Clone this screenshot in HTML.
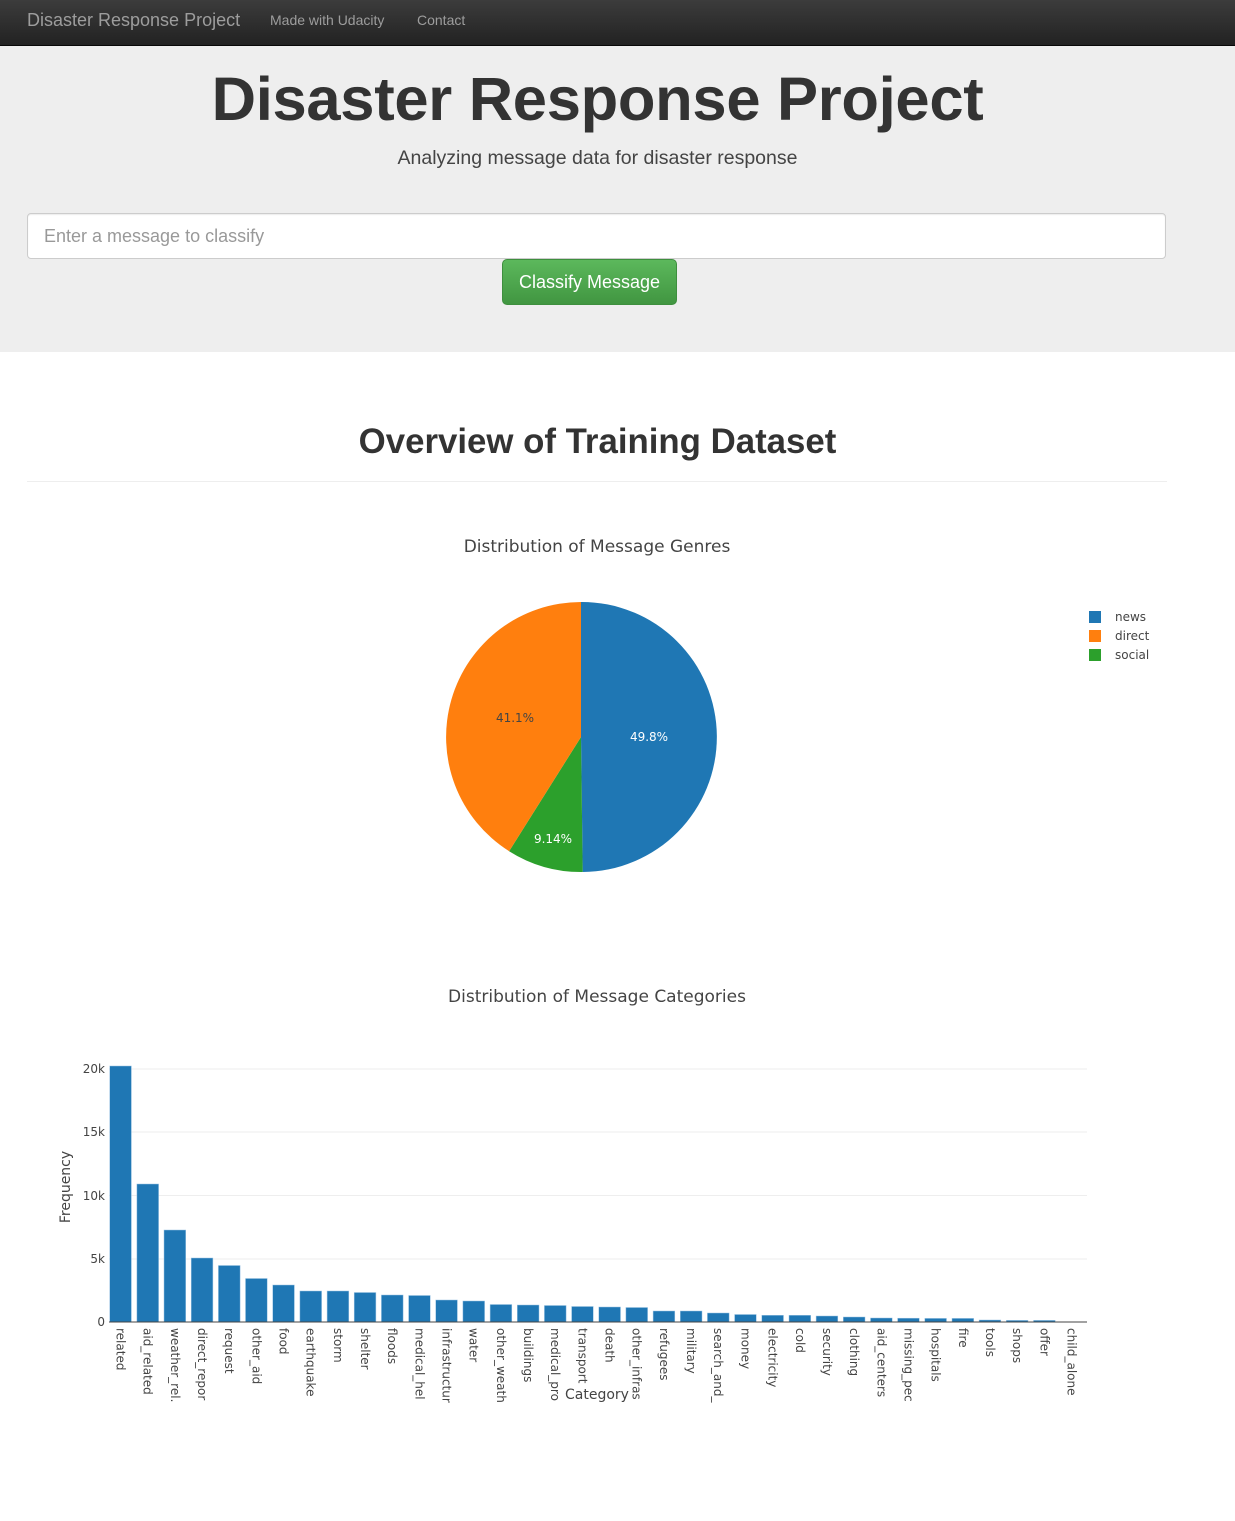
<!DOCTYPE html>
<html><head><meta charset="utf-8"><style>
body{margin:0;font-family:"Liberation Sans",Helvetica,Arial,sans-serif;color:#333;background:#fff;width:1235px;height:1521px;overflow:hidden;position:relative}
.nav{position:absolute;left:0;top:0;width:1235px;height:45px;background:linear-gradient(#3c3c3c,#222);border-bottom:1px solid #080808}
.nav span{position:absolute;top:0;line-height:41px;color:#9d9d9d}
.jumbo{position:absolute;left:0;top:46px;width:1235px;height:306px;background:#eee}
h1{position:absolute;left:0;width:1195px;text-align:center;top:62px;margin:0;font-size:61.5px;font-weight:bold;line-height:76px;letter-spacing:-0.3px}
.sub{position:absolute;left:0;width:1195px;text-align:center;top:147px;font-size:19.5px;font-weight:300;color:#444}
.inp{position:absolute;left:27px;top:213px;width:1137px;height:44px;border:1px solid #ccc;border-radius:4px;background:#fff;box-shadow:inset 0 1px 1px rgba(0,0,0,.075)}
.inp span{position:absolute;left:16px;top:12px;font-size:18px;color:#999}
.btn{position:absolute;left:502px;top:259px;width:173px;height:44px;border:1px solid #3e8f3e;border-radius:5px;background:linear-gradient(#5cb85c,#419641);color:#fff;font-size:18px;text-align:center;line-height:44px}
h2{position:absolute;left:0;width:1195px;text-align:center;top:422px;margin:0;font-size:34.8px;font-weight:bold}
.hr{position:absolute;left:27px;top:481px;width:1140px;border-top:1px solid #eee}
svg text{font-family:"DejaVu Sans",sans-serif}
</style></head><body>
<div class="nav"><span style="left:27px;font-size:18px">Disaster Response Project</span><span style="left:270px;font-size:14px">Made with Udacity</span><span style="left:417px;font-size:14px">Contact</span></div>
<div class="jumbo"></div>
<h1>Disaster Response Project</h1>
<div class="sub">Analyzing message data for disaster response</div>
<div class="inp"><span>Enter a message to classify</span></div>
<div class="btn">Classify Message</div>
<h2>Overview of Training Dataset</h2>
<div class="hr"></div>
<svg width="1235" height="1521" style="position:absolute;left:0;top:0" xmlns="http://www.w3.org/2000/svg">
<text x="597" y="552" font-size="17" fill="#444" text-anchor="middle">Distribution of Message Genres</text>
<path d="M581,737 L581,602 A135,135 0 0 1 582.7,872 Z" fill="#1f77b4"/>
<path d="M581,737 L582.7,872 A135,135 0 0 1 509.1,851.2 Z" fill="#2ca02c"/>
<path d="M581,737 L509.1,851.2 A135,135 0 0 1 581,602 Z" fill="#ff7f0e"/>
<text x="649" y="741" font-size="12" fill="#fff" text-anchor="middle">49.8%</text>
<text x="515" y="722" font-size="12" fill="#444" text-anchor="middle">41.1%</text>
<text x="553" y="843" font-size="12" fill="#fff" text-anchor="middle">9.14%</text>
<rect x="1089" y="611" width="12" height="12" fill="#1f77b4"/><text x="1115" y="621" font-size="12" fill="#444">news</text>
<rect x="1089" y="630" width="12" height="12" fill="#ff7f0e"/><text x="1115" y="640" font-size="12" fill="#444">direct</text>
<rect x="1089" y="649" width="12" height="12" fill="#2ca02c"/><text x="1115" y="659" font-size="12" fill="#444">social</text>

<text x="597" y="1002" font-size="17" fill="#444" text-anchor="middle">Distribution of Message Categories</text>
<g stroke="#eee" stroke-width="1">
<line x1="109" x2="1087" y1="1069" y2="1069"/><line x1="109" x2="1087" y1="1132" y2="1132"/><line x1="109" x2="1087" y1="1195.5" y2="1195.5"/><line x1="109" x2="1087" y1="1259" y2="1259"/>
</g>
<g font-size="12" fill="#444" text-anchor="end">
<text x="105" y="1073">20k</text><text x="105" y="1136">15k</text><text x="105" y="1200">10k</text><text x="105" y="1263">5k</text><text x="105" y="1326">0</text>
</g>
<text transform="translate(70,1187) rotate(-90)" font-size="14" fill="#444" text-anchor="middle">Frequency</text>
<g transform="translate(0,1322) scale(1,-1)" fill="#1f77b4" stroke="#9ec5e4" stroke-width="0.5">
<rect x="109.7" width="21.7" height="256"/>
<rect x="136.9" width="21.7" height="138"/>
<rect x="164.0" width="21.7" height="92"/>
<rect x="191.2" width="21.7" height="64"/>
<rect x="218.4" width="21.7" height="56.5"/>
<rect x="245.5" width="21.7" height="43.5"/>
<rect x="272.7" width="21.7" height="37"/>
<rect x="299.9" width="21.7" height="31"/>
<rect x="327.1" width="21.7" height="31"/>
<rect x="354.2" width="21.7" height="29.5"/>
<rect x="381.4" width="21.7" height="27"/>
<rect x="408.6" width="21.7" height="26.5"/>
<rect x="435.7" width="21.7" height="22"/>
<rect x="462.9" width="21.7" height="21"/>
<rect x="490.1" width="21.7" height="17.5"/>
<rect x="517.3" width="21.7" height="17"/>
<rect x="544.4" width="21.7" height="16.5"/>
<rect x="571.6" width="21.7" height="15.5"/>
<rect x="598.8" width="21.7" height="15"/>
<rect x="625.9" width="21.7" height="14.5"/>
<rect x="653.1" width="21.7" height="11"/>
<rect x="680.3" width="21.7" height="11"/>
<rect x="707.4" width="21.7" height="9"/>
<rect x="734.6" width="21.7" height="7.5"/>
<rect x="761.8" width="21.7" height="6.7"/>
<rect x="789.0" width="21.7" height="6.7"/>
<rect x="816.1" width="21.7" height="6"/>
<rect x="843.3" width="21.7" height="5"/>
<rect x="870.5" width="21.7" height="4"/>
<rect x="897.6" width="21.7" height="3.8"/>
<rect x="924.8" width="21.7" height="3.6"/>
<rect x="952.0" width="21.7" height="3.6"/>
<rect x="979.1" width="21.7" height="2"/>
<rect x="1006.3" width="21.7" height="1.6"/>
<rect x="1033.5" width="21.7" height="1.6"/>
</g>
<line x1="109" x2="1087" y1="1322" y2="1322" stroke="#444" stroke-width="1"/>
<g font-size="12" fill="#444">
<text transform="translate(116.5,1328) rotate(90)">related</text>
<text transform="translate(143.7,1328) rotate(90)">aid_related</text>
<text transform="translate(170.8,1328) rotate(90)">weather_rel.</text>
<text transform="translate(198,1328) rotate(90)">direct_repor</text>
<text transform="translate(225.2,1328) rotate(90)">request</text>
<text transform="translate(252.3,1328) rotate(90)">other_aid</text>
<text transform="translate(279.5,1328) rotate(90)">food</text>
<text transform="translate(306.7,1328) rotate(90)">earthquake</text>
<text transform="translate(333.9,1328) rotate(90)">storm</text>
<text transform="translate(361,1328) rotate(90)">shelter</text>
<text transform="translate(388.2,1328) rotate(90)">floods</text>
<text transform="translate(415.4,1328) rotate(90)">medical_hel</text>
<text transform="translate(442.5,1328) rotate(90)">infrastructur</text>
<text transform="translate(469.7,1328) rotate(90)">water</text>
<text transform="translate(496.9,1328) rotate(90)">other_weath</text>
<text transform="translate(524.1,1328) rotate(90)">buildings</text>
<text transform="translate(551.2,1328) rotate(90)">medical_pro</text>
<text transform="translate(578.4,1328) rotate(90)">transport</text>
<text transform="translate(605.6,1328) rotate(90)">death</text>
<text transform="translate(632.7,1328) rotate(90)">other_infras</text>
<text transform="translate(659.9,1328) rotate(90)">refugees</text>
<text transform="translate(687.1,1328) rotate(90)">military</text>
<text transform="translate(714.2,1328) rotate(90)">search_and_</text>
<text transform="translate(741.4,1328) rotate(90)">money</text>
<text transform="translate(768.6,1328) rotate(90)">electricity</text>
<text transform="translate(795.8,1328) rotate(90)">cold</text>
<text transform="translate(822.9,1328) rotate(90)">security</text>
<text transform="translate(850.1,1328) rotate(90)">clothing</text>
<text transform="translate(877.3,1328) rotate(90)">aid_centers</text>
<text transform="translate(904.4,1328) rotate(90)">missing_pec</text>
<text transform="translate(931.6,1328) rotate(90)">hospitals</text>
<text transform="translate(958.8,1328) rotate(90)">fire</text>
<text transform="translate(985.9,1328) rotate(90)">tools</text>
<text transform="translate(1013.1,1328) rotate(90)">shops</text>
<text transform="translate(1040.3,1328) rotate(90)">offer</text>
<text transform="translate(1067.5,1328) rotate(90)">child_alone</text>
</g>
<text x="597" y="1399" font-size="14" fill="#444" text-anchor="middle">Category</text>
</svg>
</body></html>
